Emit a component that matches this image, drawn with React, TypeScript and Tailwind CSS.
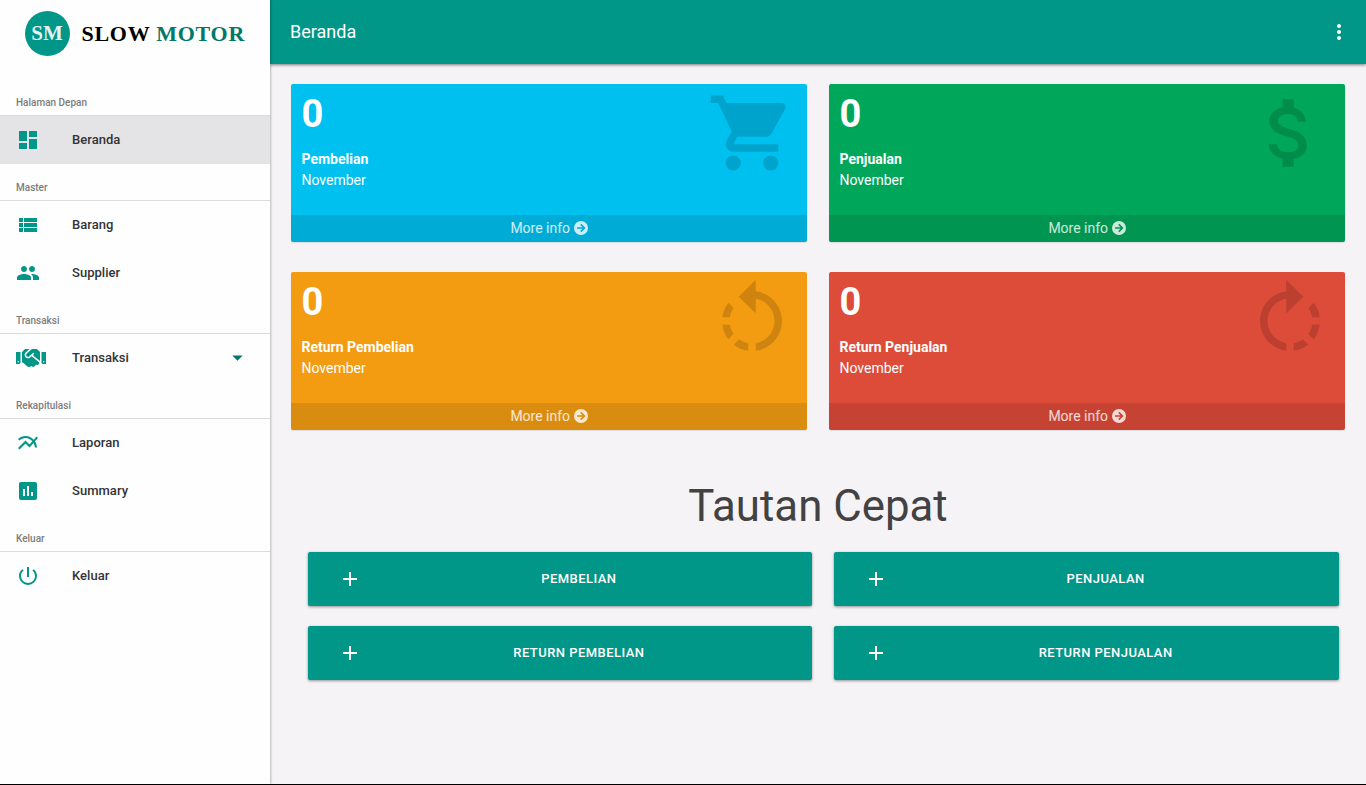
import type { ReactNode } from "react";
import type { IconType } from "react-icons";
import {
  MdAdd,
  MdArrowDropDown,
  MdAssessment,
  MdAttachMoney,
  MdDashboard,
  MdMoreVert,
  MdMultilineChart,
  MdPeople,
  MdPowerSettingsNew,
  MdRotateLeft,
  MdRotateRight,
  MdShoppingCart,
  MdViewList,
} from "react-icons/md";
import { FaHandshake } from "react-icons/fa";

function MenuSection({ title, children }: { title: string; children: ReactNode }) {
  return (
    <section>
      <h2 className="flex h-[37px] items-end border-b border-[#dcdcdf] px-4 pb-[5px] text-[10px] leading-[14px] font-medium text-[#7c7c7c]">
        {title}
      </h2>
      {children}
    </section>
  );
}

type MenuItemProps = {
  icon: IconType;
  label: string;
  active?: boolean;
  expandable?: boolean;
  iconSize?: number;
};

function MenuItem({ icon: Icon, label, active, expandable, iconSize = 24 }: MenuItemProps) {
  return (
    <a className={`flex h-12 items-center pr-5 pl-4 ${active ? "bg-[#e4e3e5]" : ""}`}>
      <span className="flex w-14 shrink-0 items-center text-[#009688]">
        <Icon size={iconSize} />
      </span>
      <span className="grow text-[13px] font-medium tracking-[0.03px] text-[#333336]">{label}</span>
      {expandable && <MdArrowDropDown size={25} className="-mt-px text-[#00796b]" />}
    </a>
  );
}

function ArrowCircle({ arrow }: { arrow: string }) {
  return (
    <svg viewBox="0 0 14 14" className="-mt-px size-[14px]">
      <circle cx="7" cy="7" r="7" fill="currentColor" />
      <path d="M3 7H10.2M6.8 3.4L10.4 7L6.8 10.6" fill="none" className={arrow} strokeWidth="1.6" />
    </svg>
  );
}

type StatCardProps = { icon: IconType; title: string; color: string; arrow: string };

function StatCard({ icon: Icon, title, color, arrow }: StatCardProps) {
  return (
    <div
      className={`flex h-[158px] flex-col overflow-hidden rounded-[2px] text-white shadow-[0_1px_1px_rgba(0,0,0,0.1)] ${color}`}
    >
      <div className="flex grow justify-between pr-[10px] pl-[10.5px]">
        <div>
          <p className="mt-[9px] text-[38px] leading-[42px] font-bold">0</p>
          <p className="mt-[14px] text-[14px] leading-[21px] font-bold">{title}</p>
          <p className="text-[14px] leading-[21px]">November</p>
        </div>
        <Icon size={90} className="mt-1 text-black/15" />
      </div>
      <a className="flex h-[27px] items-center justify-center gap-[3.5px] bg-black/10 text-[14px] text-white/80">
        More info <ArrowCircle arrow={arrow} />
      </a>
    </div>
  );
}

function QuickLink({ label }: { label: string }) {
  return (
    <button className="flex h-[54px] items-center rounded-[2px] bg-[#009688] px-[30px] text-white shadow-[0_1px_3px_rgba(0,0,0,0.4)]">
      <MdAdd size={24} className="-mt-px" />
      <span className="grow pl-[14px] text-center text-[13px] font-medium tracking-[0.45px]">{label}</span>
    </button>
  );
}

export default function App() {
  return (
    <div className="flex h-[785px] w-[1366px] overflow-hidden border-b border-black bg-[#f5f3f6] font-['Roboto',sans-serif]">
      <aside className="z-10 w-[270px] shrink-0 bg-[#fefefe] shadow-[1px_0_2px_rgba(0,0,0,0.25)]">
        <div className="flex h-[79px] items-start gap-3 pt-[10.5px] pl-[24.5px] font-['Liberation_Serif',serif] font-bold">
          <div className="flex size-[45px] items-center justify-center rounded-full bg-[#009688] text-[21px] leading-none text-[#e4f3f1]">
            SM
          </div>
          <div className="text-[22px] leading-[45px] tracking-[0.73px] whitespace-nowrap text-black">
            SLOW <span className="text-[#00796b]">MOTOR</span>
          </div>
        </div>
        <nav>
          <MenuSection title="Halaman Depan">
            <MenuItem icon={MdDashboard} label="Beranda" active />
          </MenuSection>
          <MenuSection title="Master">
            <MenuItem icon={MdViewList} label="Barang" />
            <MenuItem icon={MdPeople} label="Supplier" />
          </MenuSection>
          <MenuSection title="Transaksi">
            <MenuItem icon={FaHandshake} label="Transaksi" iconSize={30} expandable />
          </MenuSection>
          <MenuSection title="Rekapitulasi">
            <MenuItem icon={MdMultilineChart} label="Laporan" />
            <MenuItem icon={MdAssessment} label="Summary" />
          </MenuSection>
          <MenuSection title="Keluar">
            <MenuItem icon={MdPowerSettingsNew} label="Keluar" />
          </MenuSection>
        </nav>
      </aside>
      <div className="flex grow flex-col">
        <header className="flex h-16 shrink-0 items-center justify-between bg-[#009688] pr-[15px] pl-5 text-white shadow-[0_1px_3px_rgba(0,0,0,0.5)]">
          <h1 className="pb-0.5 text-[18px]">Beranda</h1>
          <MdMoreVert size={24} />
        </header>
        <main className="pt-5 pr-[21px] pl-[21px]">
          <div className="grid grid-cols-2 gap-x-[22px] gap-y-[30px]">
            <StatCard icon={MdShoppingCart} title="Pembelian" color="bg-[#00c0ef]" arrow="stroke-[#00acd7]" />
            <StatCard icon={MdAttachMoney} title="Penjualan" color="bg-[#00a65a]" arrow="stroke-[#009551]" />
            <StatCard icon={MdRotateLeft} title="Return Pembelian" color="bg-[#f39c12]" arrow="stroke-[#da8c10]" />
            <StatCard icon={MdRotateRight} title="Return Penjualan" color="bg-[#dd4b39]" arrow="stroke-[#c64333]" />
          </div>
          <h2 className="mt-[49px] text-center text-[43.8px] leading-[54px] text-[#424242]">Tautan Cepat</h2>
          <div className="mt-[19px] grid grid-cols-2 gap-x-[22px] gap-y-5 pr-[6px] pl-[16.5px]">
            <QuickLink label="PEMBELIAN" />
            <QuickLink label="PENJUALAN" />
            <QuickLink label="RETURN PEMBELIAN" />
            <QuickLink label="RETURN PENJUALAN" />
          </div>
        </main>
      </div>
    </div>
  );
}
